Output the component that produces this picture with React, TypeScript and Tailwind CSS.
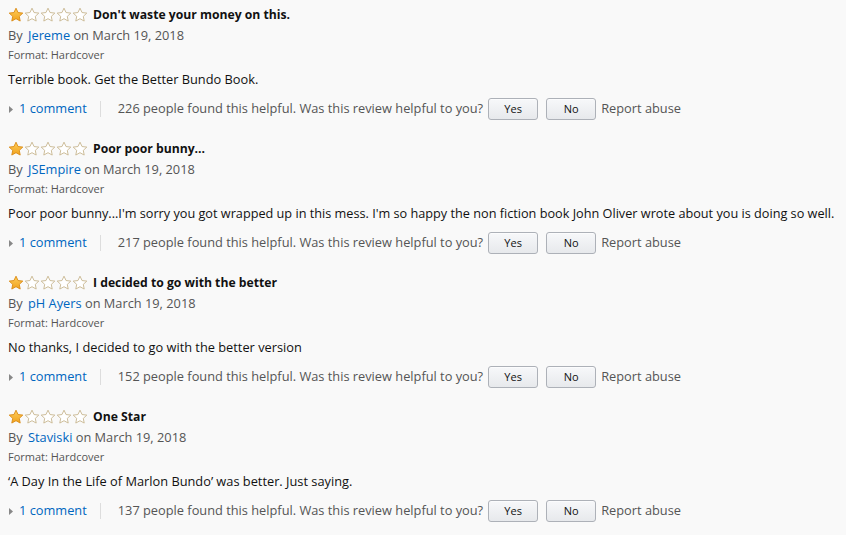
import React from "react";

type Review = { title: string; author: string; body: string; count: number; tight?: boolean };

const reviews: Review[] = [
  { title: "Don't waste your money on this.", author: "Jereme", body: "Terrible book. Get the Better Bundo Book.", count: 226 },
  { title: "Poor poor bunny...", author: "JSEmpire", body: "Poor poor bunny...I'm sorry you got wrapped up in this mess. I'm so happy the non fiction book John Oliver wrote about you is doing so well.", count: 217, tight: true },
  { title: "I decided to go with the better", author: "pH Ayers", body: "No thanks, I decided to go with the better version", count: 152 },
  { title: "One Star", author: "Staviski", body: "\u2018A Day In the Life of Marlon Bundo\u2019 was better. Just saying.", count: 137 },
];

const STAR = "M8 1.2 L10.05 5.55 L14.8 6.1 L11.3 9.35 L12.2 14.05 L8 11.7 L3.8 14.05 L4.7 9.35 L1.2 6.1 L5.95 5.55 Z";

function Star({ filled }: { filled: boolean }) {
  return (
    <svg width="16" height="16" viewBox="0 0 16 16" className="shrink-0">
      {filled ? (
        <defs>
          <linearGradient id="gold" x1="0" y1="0" x2="0" y2="1">
            <stop offset="0" stopColor="#ffce5c" />
            <stop offset="1" stopColor="#f0a11a" />
          </linearGradient>
        </defs>
      ) : null}
      <path
        d={STAR}
        fill={filled ? "url(#gold)" : "#ffffff"}
        stroke={filled ? "#d98a14" : "#c7b58e"}
        strokeWidth="0.9"
        strokeLinejoin="round"
      />
    </svg>
  );
}

function Btn({ label }: { label: string }) {
  return (
    <button className="h-[22px] w-[50px] rounded-[3px] border border-[#adb1b8] bg-gradient-to-b from-[#f7f8fa] to-[#e7e9ec] text-[11px] text-[#111] shadow-[inset_0_1px_0_rgba(255,255,255,0.6)]">
      {label}
    </button>
  );
}

function ReviewItem({ r }: { r: Review }) {
  return (
    <div className="flex h-[134px] flex-col pl-2 pt-[7px]">
      <div className="flex h-4 items-center">
        <div className="flex">
          <Star filled />
          <Star filled={false} />
          <Star filled={false} />
          <Star filled={false} />
          <Star filled={false} />
        </div>
        <span className="ml-[5px] text-[12.2px] font-bold leading-4 text-[#111]">{r.title}</span>
      </div>
      <div className="mt-[3px] h-[18px] text-[12.8px] leading-[18px] text-[#555]">
        By <a className="ml-[2px] text-[#0066c0]">{r.author}</a> on March 19, 2018
      </div>
      <div className="mt-[4px] h-[14px] text-[11px] leading-[14px] text-[#555]">Format: Hardcover</div>
      <div
        className={
          r.tight
            ? "mt-[8px] h-[18px] whitespace-nowrap text-[12.7px] leading-[18px] text-[#111]"
            : "mt-[8px] h-[18px] whitespace-nowrap text-[12.8px] leading-[18px] text-[#111]"
        }
      >
        {r.body}
      </div>
      <div className="mt-[10px] flex h-[22px] items-center text-[12.8px] text-[#555]">
        <svg width="4" height="7" viewBox="0 0 4 7" className="ml-[1px]">
          <path d="M0 0 L4 3.5 L0 7 Z" fill="#888" />
        </svg>
        <a className="ml-[6px] text-[#0066c0]">1 comment</a>
        <span className="ml-[13px] h-4 w-px bg-[#ddd]" />
        <span className="ml-[17px]">{r.count} people found this helpful. Was this review helpful to you?</span>
        <span className="ml-[5px] flex gap-[8px]">
          <Btn label="Yes" />
          <Btn label="No" />
        </span>
        <span className="ml-[5px]">Report abuse</span>
      </div>
    </div>
  );
}

export default function App() {
  return (
    <div
      className="h-[535px] w-[846px] overflow-hidden bg-[#f9f9f9]"
      style={{ fontFamily: '"Open Sans", Arial, sans-serif' }}
    >
      {reviews.map((r, i) => (
        <ReviewItem key={i} r={r} />
      ))}
    </div>
  );
}
